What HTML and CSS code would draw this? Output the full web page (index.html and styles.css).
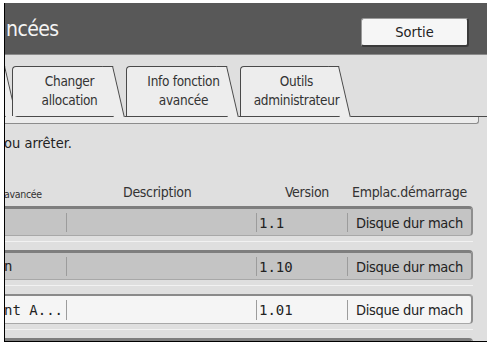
FILE: index.html
```html
<!DOCTYPE html>
<html lang="fr">
<head>
  <meta charset="UTF-8">
  <title>Fonctions avancées</title>
  <link rel="stylesheet" href="styles.css">
</head>
<body>
  <div class="screen">
    <div class="header">
      <h1 class="title">ncées</h1>
      <button class="exit">Sortie</button>
    </div>

    <div class="tabs">
      <div class="tab tab-cut"></div>
      <div class="tab"><span class="tab-label">Changer<br>allocation</span></div>
      <div class="tab"><span class="tab-label">Info fonction<br>avancée</span></div>
      <div class="tab tab-last"><span class="tab-label">Outils<br>administrateur</span></div>
    </div>
    <div class="strip"></div>

    <p class="message">ou arrêter.</p>

    <div class="cols">
      <span class="col-name">avancée</span>
      <span class="col-desc">Description</span>
      <span class="col-ver">Version</span>
      <span class="col-place">Emplac.démarrage</span>
    </div>

    <div class="list">
      <div class="row-wrap">
        <div class="row">
          <span class="cell name"></span>
          <span class="cell desc"></span>
          <span class="cell ver">1.1</span>
          <span class="cell place">Disque dur mach</span>
        </div>
      </div>
      <div class="row-wrap">
        <div class="row">
          <span class="cell name">n</span>
          <span class="cell desc"></span>
          <span class="cell ver">1.10</span>
          <span class="cell place">Disque dur mach</span>
        </div>
      </div>
      <div class="row-wrap">
        <div class="row selected">
          <span class="cell name">nt A...</span>
          <span class="cell desc"></span>
          <span class="cell ver">1.01</span>
          <span class="cell place">Disque dur mach</span>
        </div>
      </div>
      <div class="row-wrap">
        <div class="row">
          <span class="cell name"></span>
          <span class="cell desc"></span>
          <span class="cell ver"></span>
          <span class="cell place"></span>
        </div>
      </div>
    </div>
  </div>
</body>
</html>
```

FILE: styles.css
```css
body {
  margin: 0;
  background: #fff;
  font-family: "DejaVu Sans Condensed", "Liberation Sans Narrow", "DejaVu Sans", sans-serif;
  color: #222;
}

.screen {
  margin: 3px 0 0 4px;
  height: 338px;
  border-left: 1px solid #000;
  border-bottom: 1px solid #000;
  background: #dfdfdf;
  overflow: hidden;
}

.header {
  height: 52px;
  background: #585858;
  border-bottom: 1px solid #8a8a8a;
  box-sizing: border-box;
  display: flex;
  justify-content: space-between;
  align-items: flex-start;
  padding: 0 18px 0 0;
}

.title {
  margin: 14px 0 0 1px;
  font-size: 21px;
  font-weight: normal;
  color: #f4f4f4;
  letter-spacing: -0.6px;
}

.exit {
  margin-top: 15px;
  width: 108px;
  height: 29px;
  background: #f6f6f6;
  border: 1px solid #9a9a9a;
  border-right: 2px solid #3a3a3a;
  border-bottom: 2px solid #3a3a3a;
  border-radius: 3px;
  font-family: inherit;
  font-size: 14.5px;
  color: #222;
}

.tabs {
  display: flex;
  align-items: flex-end;
  gap: 13px;
  padding-top: 11px;
  border-bottom: 1px solid #4a4a4a;
}

.tab {
  position: relative;
  width: 101px;
  height: 50px;
  box-sizing: border-box;
  padding: 5px 0 0 5px;
  background: #ededed;
  border-left: 1px solid #4a4a4a;
  border-top: 1px solid #4a4a4a;
  border-top-left-radius: 4px;
  text-align: center;
  font-size: 13.5px;
  line-height: 19px;
  color: #333;
  white-space: nowrap;
}

.tab::after {
  content: "";
  position: absolute;
  top: -1px;
  right: 0;
  width: 10px;
  height: 50px;
  background: #ededed;
  border-top: 1px solid #4a4a4a;
  border-right: 1px solid #4a4a4a;
  transform: skewX(13deg);
  transform-origin: right top;
}

.tab-label {
  position: relative;
  z-index: 1;
  display: block;
  margin-right: -8px;
  letter-spacing: -0.3px;
}

.tab-cut {
  width: 0;
  padding: 0;
  border-left: none;
  margin-right: -6px;
}

.tab-last {
  width: 99px;
}

.strip {
  height: 6px;
  margin-right: 8px;
  background: #ececec;
  border-bottom: 1px solid #8c8c8c;
  border-right: 1px solid #8c8c8c;
  border-bottom-right-radius: 3px;
}

.message {
  margin: 11px 0 0 -1px;
  font-size: 14.5px;
  color: #222;
}

.cols {
  display: grid;
  grid-template-columns: 61px 190px 91px 126px;
  align-items: end;
  margin-top: 31px;
  height: 18px;
  font-size: 14px;
  color: #333;
  letter-spacing: -0.3px;
}

.col-name {
  font-size: 10.5px;
  margin-left: -1px;
}

.col-desc {
  padding-left: 57px;
}

.col-ver {
  text-align: right;
  padding-right: 18px;
}

.col-place {
  padding-left: 5px;
  white-space: nowrap;
}

.list {
  margin-top: 6px;
}

.row-wrap {
  margin-right: 14px;
  padding-bottom: 5px;
  margin-bottom: 8px;
  border-bottom: 1px solid #f2f2f2;
}

.row {
  display: grid;
  grid-template-columns: 61px 190px 91px 1fr;
  height: 30px;
  box-sizing: border-box;
  background: #c4c4c4;
  border-top: 3px solid #7e7e7e;
  border-right: 2px solid #8e8e8e;
  border-bottom: 1px solid #a8a8a8;
  border-radius: 0 4px 4px 0;
}

.row.selected {
  background: #f5f5f5;
  border-top: 2px solid #8a8a8a;
}

.cell {
  display: flex;
  align-items: center;
  font-size: 14.5px;
  white-space: nowrap;
  overflow: hidden;
  letter-spacing: -0.3px;
}

.name {
  margin-left: -1px;
  font-family: "DejaVu Sans Mono", "Liberation Mono", monospace;
  font-size: 14px;
  letter-spacing: 0;
}

.desc, .ver, .place {
  border-left: 1px solid #9c9c9c;
  margin: 4px 0 3px;
}

.ver {
  padding-left: 2px;
  font-family: "DejaVu Sans Mono", "Liberation Mono", monospace;
  font-size: 14px;
  letter-spacing: 0;
}

.place {
  padding-left: 8px;
}
```
